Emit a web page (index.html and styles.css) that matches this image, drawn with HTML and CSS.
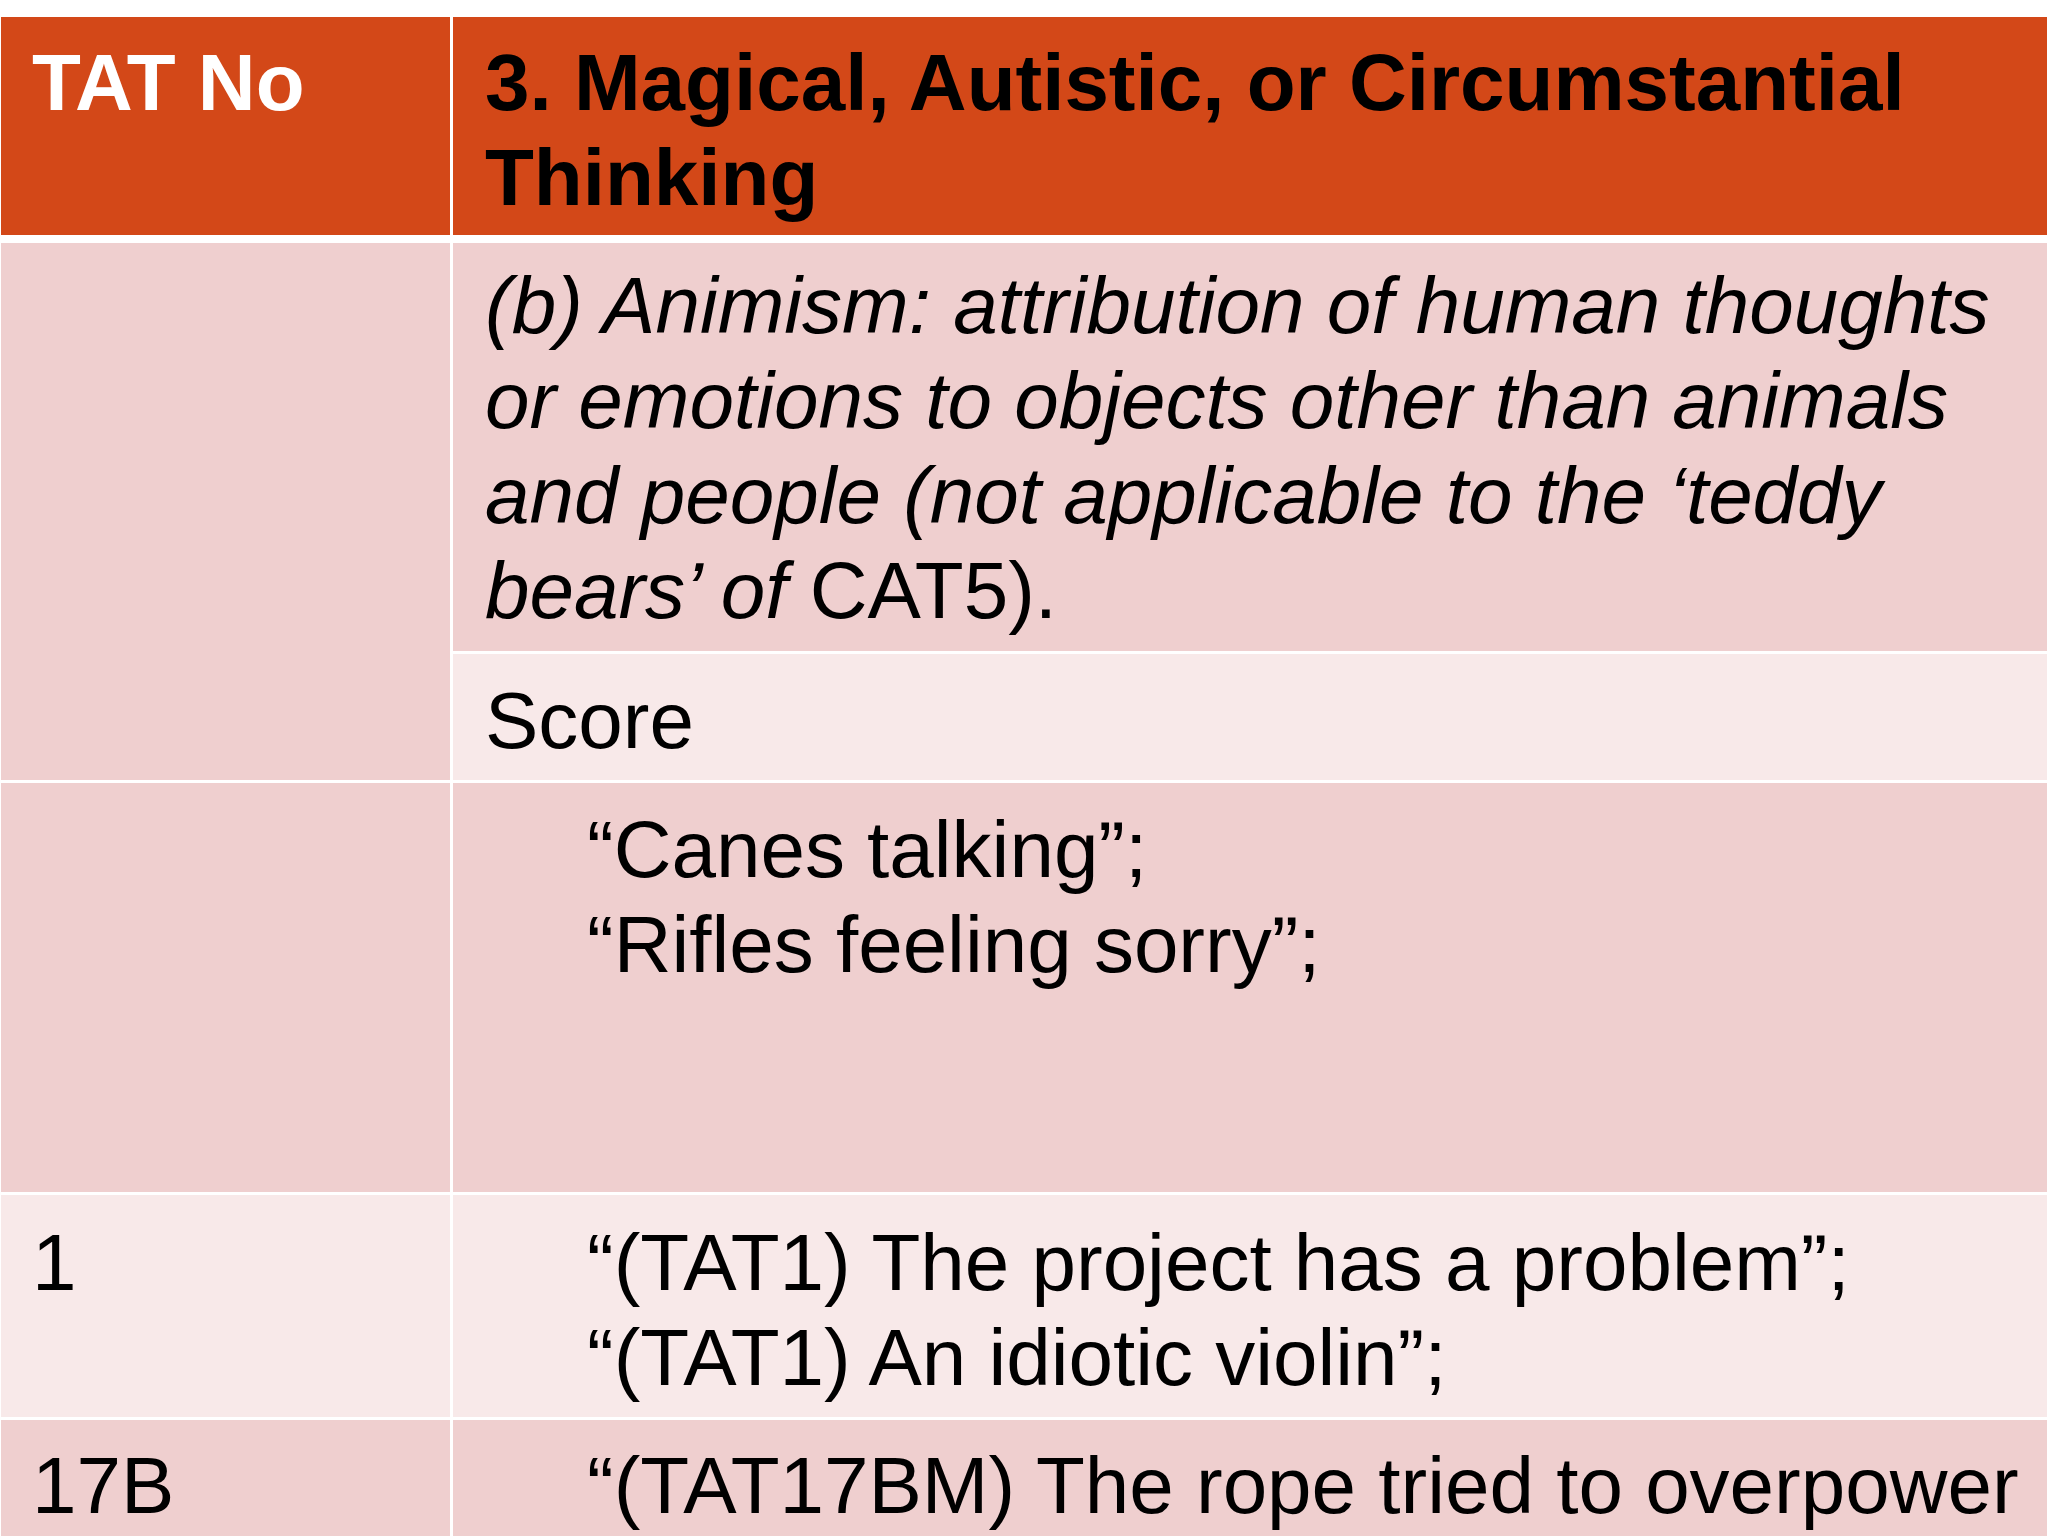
FILE: index.html
```html
<!DOCTYPE html>
<html lang="en">
<head>
<meta charset="utf-8">
<title>TAT No — Magical, Autistic, or Circumstantial Thinking</title>
<link rel="stylesheet" href="styles.css">
</head>
<body>
<table class="grid">
  <colgroup>
    <col class="col-left">
    <col class="col-right">
  </colgroup>
  <tr class="row-head">
    <th class="cell left head head-left">TAT No</th>
    <th class="cell right head head-right">3. Magical, Autistic, or Circumstantial Thinking</th>
  </tr>
  <tr class="row-def">
    <td class="cell left pink" rowspan="2"></td>
    <td class="cell right pink pad-def"><span class="it">(b) Animism: attribution of human thoughts or emotions to objects other than animals and people (not applicable to the ‘teddy bears’ of </span>CAT5).</td>
  </tr>
  <tr class="row-score">
    <td class="cell right light pad-score">Score</td>
  </tr>
  <tr class="row-canes">
    <td class="cell left pink"></td>
    <td class="cell right pink pad-canes"><p class="indent">“Canes talking”;<br>“Rifles feeling sorry”;</p></td>
  </tr>
  <tr class="row-one">
    <td class="cell left light pad-one">1</td>
    <td class="cell right light pad-one"><p class="indent">“(TAT1) The project has a problem”;<br>“(TAT1) An idiotic violin”;</p></td>
  </tr>
  <tr class="row-last">
    <td class="cell left pink pad-last">17B</td>
    <td class="cell right pink pad-last"><p class="indent">“(TAT17BM) The rope tried to overpower him”;</p></td>
  </tr>
</table>
</body>
</html>
```

FILE: styles.css
```css
html, body {
  margin: 0;
  padding: 0;
  background: #ffffff;
}

body {
  width: 2048px;
  height: 1536px;
  overflow: hidden;
  padding-top: 17px;
  padding-left: 1px;
  box-sizing: border-box;
  font-family: "Liberation Sans", Arial, sans-serif;
  font-size: 80px;
  line-height: 95px;
  color: #000000;
}

.grid {
  width: 2046px;
  table-layout: fixed;
  border-collapse: separate;
  border-spacing: 0;
}

.col-left { width: 452px; }
.col-right { width: 1594px; }

.cell {
  box-sizing: border-box;
  vertical-align: top;
  text-align: left;
  font-weight: normal;
  padding: 18px 20px 0 32px;
  border-bottom: 3px solid #ffffff;
}

.cell.left {
  padding-left: 31px;
  border-right: 3px solid #ffffff;
}

.head {
  background: #d34818;
  font-weight: bold;
  border-bottom: 8px solid #ffffff;
}

.head-left { color: #ffffff; }
.head-right { color: #000000; }

.pink { background: #efcfcf; }
.light { background: #f8e9e9; }

.row-head { height: 226px; }
.row-def { height: 411px; }
.row-score { height: 129px; }
.row-canes { height: 412px; }
.row-one { height: 225px; }
.row-last { height: 300px; }

.pad-def { padding-top: 15px; }
.pad-score { padding-top: 19px; }
.pad-canes { padding-top: 19px; }
.pad-one { padding-top: 20px; }
.pad-last { padding-top: 18px; }

.it { font-style: italic; }

.indent {
  margin: 0 0 0 102px;
}
```
